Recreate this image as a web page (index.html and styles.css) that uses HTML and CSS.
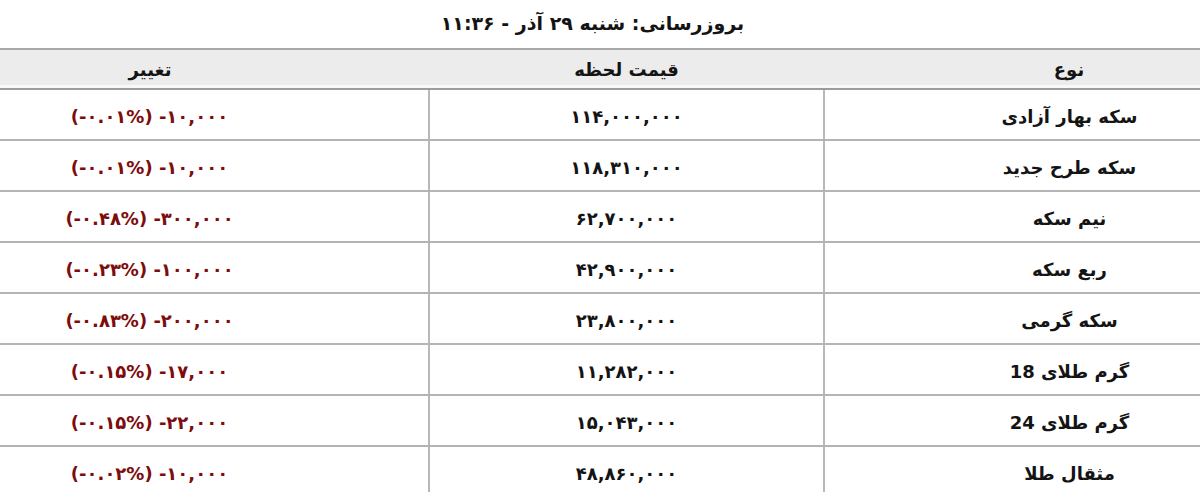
FILE: index.html
```html
<!DOCTYPE html>
<html lang="fa" dir="rtl">
<head>
<meta charset="utf-8">
<link rel="stylesheet" href="styles.css">
</head>
<body>
<div class="sheet">
  <div class="title">بروزرسانی: شنبه ۲۹ آذر - ۱۱:۳۶</div>
  <table class="prices">
    <thead>
      <tr><th class="c-name">نوع</th><th class="c-price">قیمت لحظه</th><th class="c-change">تغییر</th></tr>
    </thead>
    <tbody>
      <tr><td>سکه بهار آزادی</td><td>۱۱۴,۰۰۰,۰۰۰</td><td class="neg"><span dir="ltr">(-۰.۰۱%) -۱۰,۰۰۰</span></td></tr>
      <tr><td>سکه طرح جدید</td><td>۱۱۸,۳۱۰,۰۰۰</td><td class="neg"><span dir="ltr">(-۰.۰۱%) -۱۰,۰۰۰</span></td></tr>
      <tr><td>نیم سکه</td><td>۶۲,۷۰۰,۰۰۰</td><td class="neg"><span dir="ltr">(-۰.۴۸%) -۳۰۰,۰۰۰</span></td></tr>
      <tr><td>ربع سکه</td><td>۴۲,۹۰۰,۰۰۰</td><td class="neg"><span dir="ltr">(-۰.۲۳%) -۱۰۰,۰۰۰</span></td></tr>
      <tr><td>سکه گرمی</td><td>۲۳,۸۰۰,۰۰۰</td><td class="neg"><span dir="ltr">(-۰.۸۳%) -۲۰۰,۰۰۰</span></td></tr>
      <tr><td>گرم طلای 18</td><td>۱۱,۲۸۲,۰۰۰</td><td class="neg"><span dir="ltr">(-۰.۱۵%) -۱۷,۰۰۰</span></td></tr>
      <tr><td>گرم طلای 24</td><td>۱۵,۰۴۳,۰۰۰</td><td class="neg"><span dir="ltr">(-۰.۱۵%) -۲۲,۰۰۰</span></td></tr>
      <tr><td>مثقال طلا</td><td>۴۸,۸۶۰,۰۰۰</td><td class="neg"><span dir="ltr">(-۰.۰۲%) -۱۰,۰۰۰</span></td></tr>
    </tbody>
  </table>
</div>
</body>
</html>
```
FILE: styles.css
```css
html, body {
  margin: 0;
  padding: 0;
  overflow: hidden;
  background: #ffffff;
}
body {
  font-family: "DejaVu Sans", "Noto Sans", sans-serif;
  color: #141414;
}
.sheet {
  width: 1200px;
}
.title {
  height: 48px;
  line-height: 46px;
  padding-right: 15px;
  text-align: center;
  font-size: 19px;
  font-weight: bold;
}
.prices {
  width: 100%;
  border-collapse: collapse;
  table-layout: fixed;
}
.prices th {
  background: #ececec;
  height: 38px;
  padding: 0;
  font-size: 18px;
  font-weight: bold;
  text-align: center;
  border-top: 2px solid #a8a8a8;
  border-bottom: 2px solid #9c9c9c;
  box-shadow: inset 0 -3px 0 #f8f8f8;
}
.c-name { width: 262px; }
.c-price { width: 395px; }
.c-change { width: 300px; }
.prices td {
  height: 46px;
  padding: 3px 0 0 0;
  text-align: center;
  font-size: 18px;
  font-weight: bold;
  border-bottom: 2px solid #b4b4b4;
  border-left: 2px solid #b8b8b8;
}
.prices th.c-name,
.prices td:first-child {
  padding-left: 114px;
}
.prices th.c-change,
.prices td:last-child {
  padding-right: 129px;
  border-left: none;
}
.prices td.neg {
  color: #7d0c0c;
}
```
